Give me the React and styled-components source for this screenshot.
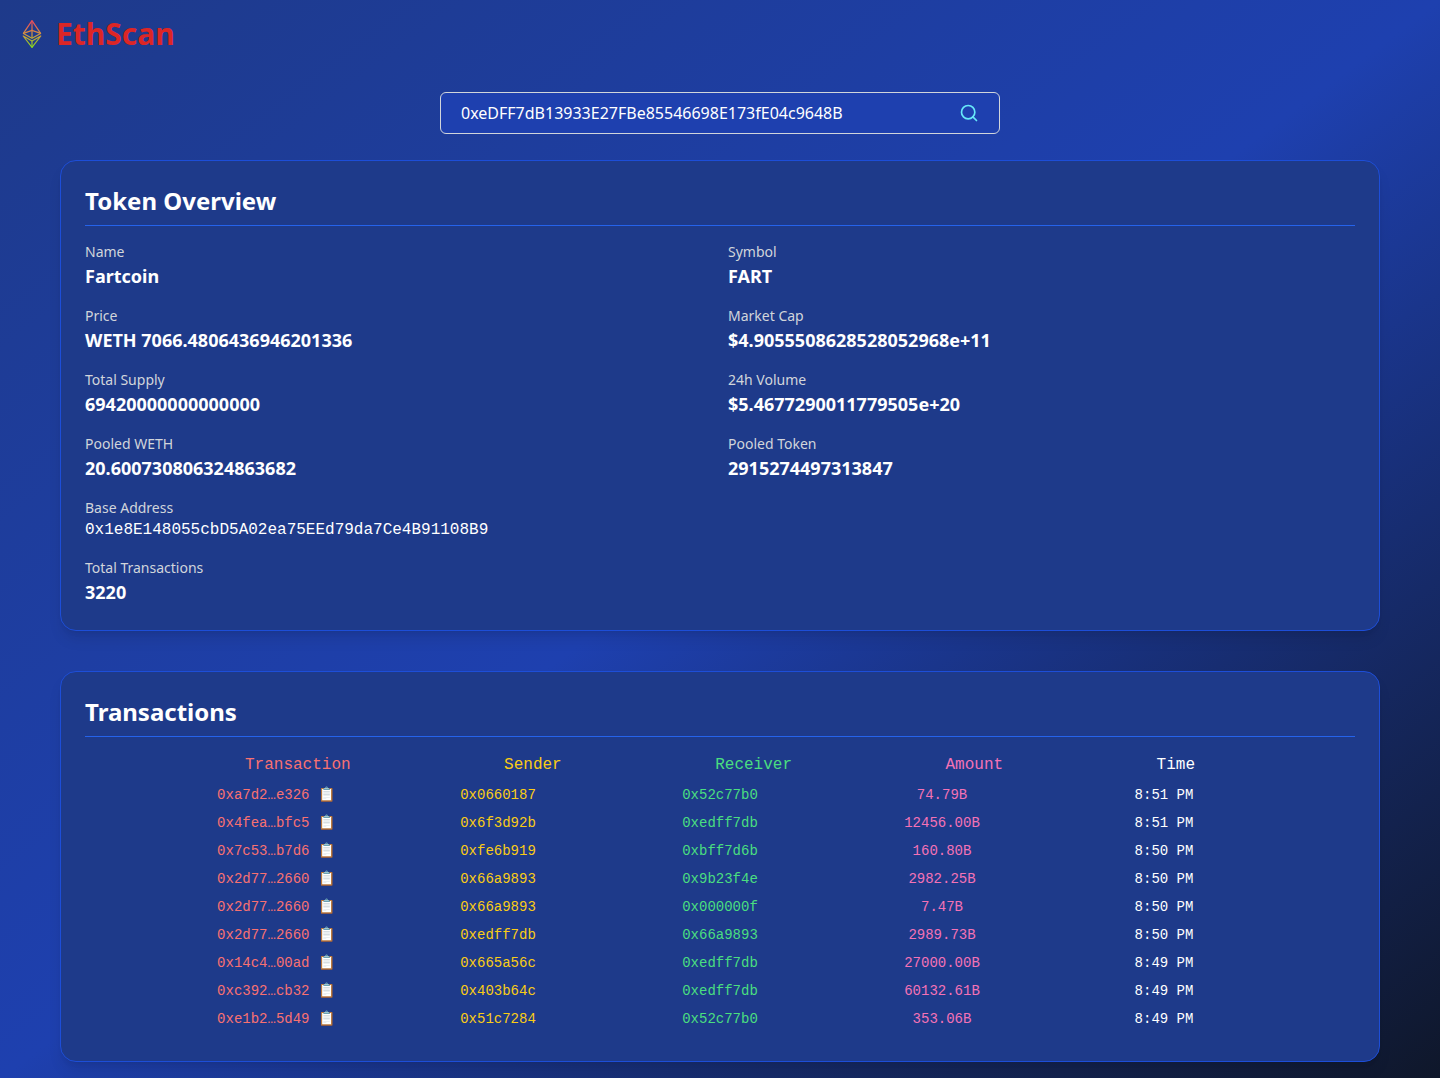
import React from "react";
import styled, { createGlobalStyle } from "styled-components";

const mono = '"Liberation Mono", monospace';

const GlobalStyle = createGlobalStyle`
  *, *::before, *::after { box-sizing: border-box; }
  body { margin: 0; }
  h1, h2, p { margin: 0; }
`;

const Page = styled.div`
  display: flex;
  flex-direction: column;
  min-height: 100vh;
  padding: 16px;
  color: #fff;
  font-family: "Noto Sans", sans-serif;
  font-size: 16px;
  line-height: 24px;
  background: linear-gradient(to bottom right, #1e3a8a, #1e40af, #0f172a);
`;

const Header = styled.header`
  display: flex;
  align-items: center;
  gap: 8px;
  height: 36px;
`;

const Logo = styled.svg`
  display: block;
  width: 32px;
  height: 32px;
`;

const Brand = styled.h1`
  color: #dc2626;
  font-size: 30px;
  font-weight: 700;
  line-height: 36px;
`;

const SearchBar = styled.form`
  display: flex;
  align-items: center;
  width: 560px;
  height: 42px;
  margin: 40px auto 26px;
  padding: 0 20px;
  border: 1px solid #d1d5db;
  border-radius: 6px;
  background: #1e40af;
`;

const SearchInput = styled.input`
  flex: 1;
  min-width: 0;
  padding: 0;
  border: 0;
  outline: 0;
  background: transparent;
  color: #fff;
  font: inherit;
`;

const SearchButton = styled.button`
  display: flex;
  padding: 0;
  border: 0;
  background: transparent;
  color: #67e8f9;
`;

const Main = styled.main`
  display: flex;
  flex-direction: column;
  gap: 40px;
  width: 1320px;
  margin: 0 auto;
`;

const Card = styled.section`
  height: ${(p) => p.$height}px;
  padding: 24px;
  border: 1px solid #1d4ed8;
  border-radius: 16px;
  background: #1e3a8a;
  box-shadow: 0 10px 15px -3px rgba(0, 0, 0, 0.1), 0 4px 6px -4px rgba(0, 0, 0, 0.1);
`;

const CardTitle = styled.h2`
  padding-bottom: 8px;
  border-bottom: 1px solid #2563eb;
  font-size: 24px;
  font-weight: 700;
  line-height: 32px;
`;

const Details = styled.div`
  display: grid;
  grid-template-columns: 1fr 1fr;
  gap: 16px;
  margin-top: 16px;
`;

const Detail = styled.div`
  grid-column: ${(p) => (p.$wide ? "1 / -1" : "auto")};
`;

const Label = styled.p`
  color: #d1d5db;
  font-size: 14px;
  line-height: 20px;
`;

const Value = styled.p`
  font-family: ${(p) => (p.$mono ? mono : "inherit")};
  font-size: ${(p) => (p.$mono ? 16 : 18)}px;
  font-weight: ${(p) => (p.$mono ? 400 : 700)};
  line-height: ${(p) => (p.$mono ? 24 : 28)}px;
`;

const ColumnHeads = styled.div`
  display: flex;
  justify-content: space-evenly;
  margin-top: 16px;
  padding: 0 6.5px;
  font-family: ${mono};
`;

const Rows = styled.div`
  display: flex;
  flex-direction: column;
  align-items: center;
  margin-top: 4px;
`;

const Row = styled.div`
  display: grid;
  grid-template-columns: repeat(5, 1fr);
  align-items: center;
  width: 1110px;
  height: 28px;
  font-family: ${mono};
  font-size: 14px;
  line-height: 20px;
  text-align: center;
`;

const Cell = styled.span`
  color: ${(p) => p.$color};
  white-space: nowrap;
`;

const CopyButton = styled.button`
  margin: 0 0.4px 0 8px;
  padding: 0;
  border: 0;
  background: transparent;
  color: inherit;
  font: inherit;
`;

const colors = ["#f87171", "#facc15", "#4ade80", "#f472b6", "#ffffff"];
const heads = ["Transaction", "Sender", "Receiver", "Amount", "Time"];

const details = [
  { label: "Name", value: "Fartcoin" },
  { label: "Symbol", value: "FART" },
  { label: "Price", value: "WETH 7066.4806436946201336" },
  { label: "Market Cap", value: "$4.9055508628528052968e+11" },
  { label: "Total Supply", value: "69420000000000000" },
  { label: "24h Volume", value: "$5.4677290011779505e+20" },
  { label: "Pooled WETH", value: "20.600730806324863682" },
  { label: "Pooled Token", value: "2915274497313847" },
  { label: "Base Address", value: "0x1e8E148055cbD5A02ea75EEd79da7Ce4B91108B9", wide: true, mono: true },
  { label: "Total Transactions", value: "3220" },
];

const transactions = [
  ["0xa7d2…e326", "0x0660187", "0x52c77b0", "74.79B", "8:51 PM"],
  ["0x4fea…bfc5", "0x6f3d92b", "0xedff7db", "12456.00B", "8:51 PM"],
  ["0x7c53…b7d6", "0xfe6b919", "0xbff7d6b", "160.80B", "8:50 PM"],
  ["0x2d77…2660", "0x66a9893", "0x9b23f4e", "2982.25B", "8:50 PM"],
  ["0x2d77…2660", "0x66a9893", "0x000000f", "7.47B", "8:50 PM"],
  ["0x2d77…2660", "0xedff7db", "0x66a9893", "2989.73B", "8:50 PM"],
  ["0x14c4…00ad", "0x665a56c", "0xedff7db", "27000.00B", "8:49 PM"],
  ["0xc392…cb32", "0x403b64c", "0xedff7db", "60132.61B", "8:49 PM"],
  ["0xe1b2…5d49", "0x51c7284", "0x52c77b0", "353.06B", "8:49 PM"],
];

function EthLogo() {
  return (
    <Logo viewBox="0 0 32 32" fill="none" aria-hidden="true">
      <defs>
        <linearGradient id="eth" gradientUnits="userSpaceOnUse" x1="0" y1="5" x2="0" y2="29">
          <stop offset="0" stopColor="#e8505a" />
          <stop offset="0.5" stopColor="#d09a3c" />
          <stop offset="1" stopColor="#84d820" />
        </linearGradient>
      </defs>
      <g stroke="url(#eth)" strokeWidth="1.2" strokeLinejoin="round">
        <path d="M16 2.7 L24.6 15.4 L16 20.2 L7.4 15.4 Z" />
        <path d="M7.4 15.4 L16 12.4 L24.6 15.4" />
        <path d="M16 2.7 V20.2" />
        <path d="M7.2 18 L16 22.9 L24.8 18 L16 29.4 Z" />
        <path d="M16 22.9 V29.4" />
      </g>
    </Logo>
  );
}

function SearchIcon() {
  return (
    <svg width="20" height="20" viewBox="0 0 24 24" fill="none" stroke="currentColor" strokeWidth="2" strokeLinecap="round" strokeLinejoin="round">
      <circle cx="11" cy="11" r="8" />
      <path d="m21 21-4.35-4.35" />
    </svg>
  );
}

export default function App() {
  return (
    <Page>
      <GlobalStyle />
      <Header>
        <EthLogo />
        <Brand>EthScan</Brand>
      </Header>
      <SearchBar onSubmit={(e) => e.preventDefault()}>
        <SearchInput aria-label="Address" defaultValue="0xeDFF7dB13933E27FBe85546698E173fE04c9648B" />
        <SearchButton type="submit" aria-label="Search">
          <SearchIcon />
        </SearchButton>
      </SearchBar>
      <Main>
        <Card $height={471}>
          <CardTitle>Token Overview</CardTitle>
          <Details>
            {details.map((d) => (
              <Detail key={d.label} $wide={d.wide}>
                <Label>{d.label}</Label>
                <Value $mono={d.mono}>{d.value}</Value>
              </Detail>
            ))}
          </Details>
        </Card>
        <Card $height={391}>
          <CardTitle>Transactions</CardTitle>
          <ColumnHeads>
            {heads.map((h, i) => (
              <Cell key={h} $color={colors[i]}>{h}</Cell>
            ))}
          </ColumnHeads>
          <Rows>
            {transactions.map((row, r) => (
              <Row key={r}>
                {row.map((text, i) => (
                  <Cell key={i} $color={colors[i]}>
                    {text}
                    {i === 0 && <CopyButton type="button">📋</CopyButton>}
                  </Cell>
                ))}
              </Row>
            ))}
          </Rows>
        </Card>
      </Main>
    </Page>
  );
}
